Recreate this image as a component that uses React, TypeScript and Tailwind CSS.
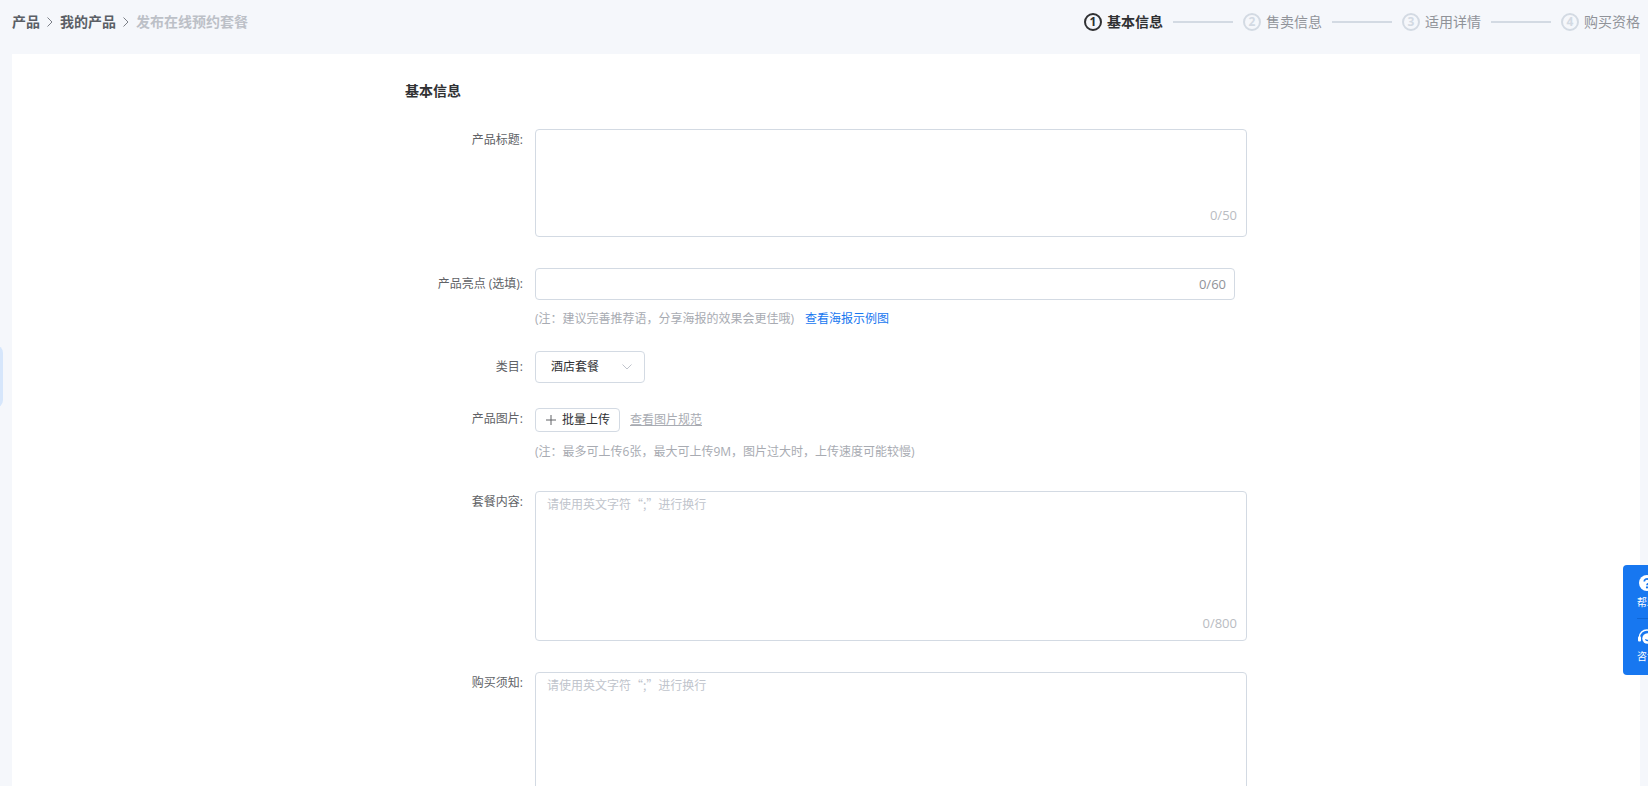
import React, { useState } from 'react';
import { clsx } from 'clsx';

const breadcrumbs = ['产品', '我的产品', '发布在线预约套餐'];

const steps = ['基本信息', '售卖信息', '适用详情', '购买资格'];

const ChevronIcon: React.FC<{ className?: string }> = ({ className }) => (
  <svg viewBox="0 0 8 12" fill="none" stroke="currentColor" className={className} aria-hidden="true">
    <path d="M1.5 1.5 6 6 1.5 10.5" />
  </svg>
);

const Breadcrumb: React.FC = () => (
  <nav aria-label="breadcrumb">
    <ol className="flex items-center text-sm leading-5 font-bold">
      {breadcrumbs.map((name, index) => {
        const isLast = index === breadcrumbs.length - 1;
        return (
          <li key={name} className="flex items-center">
            {isLast ? (
              <span className="text-[#bcc0c7]">{name}</span>
            ) : (
              <>
                <a href="#" className="text-[#5b5f66]">{name}</a>
                <ChevronIcon className="mx-1.5 h-3 w-2 text-[#7b7f87]" />
              </>
            )}
          </li>
        );
      })}
    </ol>
  </nav>
);

const StepBar: React.FC<{ current: number }> = ({ current }) => (
  <ol className="flex items-center gap-2.5 text-sm leading-5">
    {steps.map((name, index) => {
      const active = index === current;
      return (
        <React.Fragment key={name}>
          {index > 0 && <li aria-hidden="true" className="h-0.5 w-15 bg-[#d3dae3]" />}
          <li className="flex items-center gap-[5px]">
            <span
              className={clsx(
                'flex h-[18px] w-[18px] items-center justify-center rounded-full border-2 text-xs leading-none font-bold',
                active ? 'border-[#303133] text-[#303133]' : 'border-[#d3dae3] text-[#d3dae3]'
              )}
            >
              {index + 1}
            </span>
            <span className={active ? 'font-bold text-[#303133]' : 'text-[#909399]'}>{name}</span>
          </li>
        </React.Fragment>
      );
    })}
  </ol>
);

interface FieldProps {
  label: string;
  htmlFor: string;
  labelClass?: string;
  className?: string;
  children: React.ReactNode;
}

const Field: React.FC<FieldProps> = ({ label, htmlFor, labelClass, className, children }) => (
  <div className={clsx('flex gap-3', className)}>
    <label
      htmlFor={htmlFor}
      className={clsx('w-[118px] shrink-0 text-right text-xs leading-[22px] text-[#606266]', labelClass)}
    >
      {label}:
    </label>
    <div className="min-w-0 flex-1">{children}</div>
  </div>
);

interface TextAreaProps {
  id: string;
  max: number;
  heightClass: string;
  countClass: string;
  placeholder?: string;
}

const TextArea: React.FC<TextAreaProps> = ({ id, max, heightClass, countClass, placeholder }) => {
  const [value, setValue] = useState('');

  return (
    <div className="relative">
      <textarea
        id={id}
        value={value}
        maxLength={max}
        placeholder={placeholder}
        onChange={(e) => setValue(e.target.value)}
        className={clsx(
          "block w-full resize-none rounded border border-[#d3dae3] bg-white px-[11px] py-1 font-['Noto_Sans_CJK_SC',sans-serif] text-xs leading-4 text-[#303133] outline-none placeholder:text-[#c0c4cc] focus:border-[#1677ee]",
          heightClass
        )}
      />
      <span className={clsx('absolute right-2.5 text-[13px] leading-5 text-[#b9bcc2]', countClass)}>
        {value.length}/{max}
      </span>
    </div>
  );
};

const HelpIcon: React.FC = () => (
  <svg viewBox="0 0 16 16" className="h-4 w-4" aria-hidden="true">
    <circle cx="8" cy="8" r="8" fill="#fff" />
    <path d="M5.3 6.4a2.7 2.5 0 1 1 4.1 2.1C8.4 9 8 9.3 8 10.2" fill="none" stroke="#1777f0" strokeWidth="1.8" />
    <circle cx="8" cy="12.4" r="1.1" fill="#1777f0" />
  </svg>
);

const ServiceIcon: React.FC = () => (
  <svg viewBox="0 0 18 16" className="h-4 w-[18px]" aria-hidden="true">
    <path d="M1.5 9V8a7.5 7 0 0 1 15 0v1" fill="none" stroke="#fff" strokeWidth="1.5" />
    <rect x="0" y="7.5" width="3" height="5" rx="1" fill="#fff" />
    <rect x="15" y="7.5" width="3" height="5" rx="1" fill="#fff" />
    <circle cx="9.5" cy="9.5" r="5.2" fill="#fff" />
    <path d="M7.5 10.2a2.2 2.2 0 0 0 4 0" fill="none" stroke="#1777f0" strokeWidth="1.3" />
  </svg>
);

const SideTools: React.FC = () => (
  <aside className="fixed -right-[23px] bottom-[111px] flex w-12 flex-col items-center rounded bg-[#1777f0] px-3.5 pt-2.5 pb-[11px] text-[10px] leading-4 text-white">
    <button type="button" className="flex flex-col items-center gap-[3px]">
      <HelpIcon />
      <span>帮助</span>
    </button>
    <hr className="mt-2 mb-2.5 w-full border-[#0f66d6]" />
    <button type="button" className="flex flex-col items-center gap-[3px]">
      <ServiceIcon />
      <span>咨询</span>
    </button>
  </aside>
);

export default function App() {
  const [highlight, setHighlight] = useState('');
  const [category, setCategory] = useState('酒店套餐');

  return (
    <div className="min-h-screen bg-[#f5f7fb] pr-2 pl-3 font-['Open_Sans','Noto_Sans_CJK_SC',sans-serif] text-xs text-[#303133]">
      <header className="flex h-[54px] items-start justify-between pt-3">
        <Breadcrumb />
        <StepBar current={0} />
      </header>

      <main className="bg-white px-5 pt-[27px] pb-10">
        <form className="mx-auto max-w-[842px]">
          <h2 className="text-sm leading-5 font-bold">基本信息</h2>

          <Field label="产品标题" htmlFor="title" className="mt-7">
            <TextArea id="title" max={50} heightClass="h-[108px]" countClass="bottom-3" />
          </Field>

          <Field label="产品亮点 (选填)" htmlFor="highlight" labelClass="pt-[5px]" className="mt-[31px]">
            <div className="mr-3 flex h-8 items-center rounded border border-[#d3dae3] bg-white px-2">
              <input
                id="highlight"
                type="text"
                value={highlight}
                maxLength={60}
                onChange={(e) => setHighlight(e.target.value)}
                className="min-w-0 flex-1 outline-none"
              />
              <span className="text-[13px] leading-5 text-[#909399]">{highlight.length}/60</span>
            </div>
            <p className="mt-[9px] leading-5 text-[#a8abb2]">
              (注：建议完善推荐语，分享海报的效果会更佳哦)
              <a href="#" className="ml-[11px] text-[#1777f0]">查看海报示例图</a>
            </p>
          </Field>

          <Field label="类目" htmlFor="category" labelClass="pt-[5px]" className="mt-[22px]">
            <div className="relative w-[110px]">
              <select
                id="category"
                value={category}
                onChange={(e) => setCategory(e.target.value)}
                className="block h-8 w-full appearance-none rounded border border-[#d3dae3] bg-white pr-6 pl-[15px] outline-none"
              >
                <option>酒店套餐</option>
              </select>
              <ChevronIcon className="pointer-events-none absolute top-2.5 right-3.5 h-3 w-2 rotate-90 text-[#c0c4cc]" />
            </div>
          </Field>

          <Field label="产品图片" htmlFor="upload" className="mt-[25px]">
            <div className="flex items-center gap-2.5">
              <button
                id="upload"
                type="button"
                className="flex h-6 items-center gap-1.5 rounded-sm border border-[#d3dae3] bg-white pr-[9px] pl-2.5"
              >
                <svg viewBox="0 0 10 10" className="h-2.5 w-2.5" stroke="#606266" aria-hidden="true">
                  <path d="M5 0v10M0 5h10" />
                </svg>
                批量上传
              </button>
              <a href="#" className="text-[#a8abb2] underline">查看图片规范</a>
            </div>
            <p className="mt-2.5 leading-5 text-[#a8abb2]">
              (注：最多可上传6张，最大可上传9M，图片过大时，上传速度可能较慢)
            </p>
          </Field>

          <Field label="套餐内容" htmlFor="content" className="mt-[29px]">
            <TextArea
              id="content"
              max={800}
              heightClass="h-[150px]"
              countClass="bottom-2"
              placeholder="请使用英文字符“;”进行换行"
            />
          </Field>

          <Field label="购买须知" htmlFor="notice" className="mt-[31px]">
            <TextArea
              id="notice"
              max={800}
              heightClass="h-[200px]"
              countClass="bottom-2"
              placeholder="请使用英文字符“;”进行换行"
            />
          </Field>
        </form>
      </main>

      {/* collapsed menu handle, only its edge shows */}
      <button
        type="button"
        aria-label="展开菜单"
        className="fixed top-[345px] -left-[17px] h-[63px] w-5 rounded-r-lg bg-[#d6e6fb]"
      />
      <SideTools />
    </div>
  );
}
